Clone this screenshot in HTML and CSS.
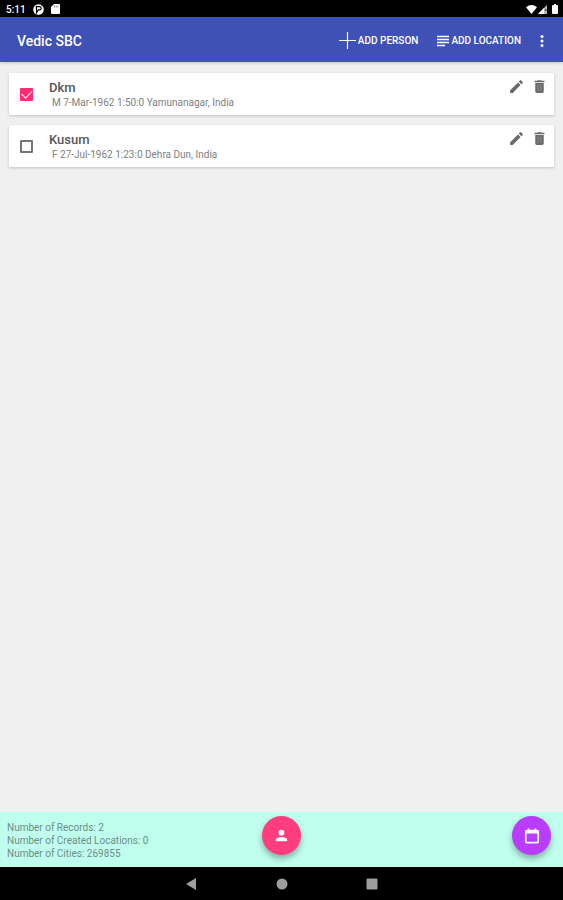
FILE: index.html
```html
<!DOCTYPE html>
<html lang="en">
<head>
    <meta charset="UTF-8">
    <meta name="viewport" content="width=device-width, initial-scale=1.0">
    <title>Vedic SBC</title>
    <link rel="stylesheet" href="styles.css">
</head>
<body>
    <div class="status-bar">
        <span class="clock">5:11</span>
        <svg class="status-icon" width="11" height="11" viewBox="0 0 11 11">
            <circle cx="5.5" cy="5.5" r="5.3" fill="#fff"/>
            <path d="M3.4 2.6h3.2a1.5 1.5 0 0 1 0 3.2H5.4L3.6 8.6z" fill="none" stroke="#000" stroke-width="1.2"/>
        </svg>
        <svg class="status-icon" width="9" height="10" viewBox="0 0 9 10">
            <path d="M3 0h5q1 0 1 1v8q0 1-1 1H1Q0 10 0 9V3z" fill="#fff"/>
            <path d="M3.5 1.5v2M5.2 1.5v2M6.9 1.5v2" stroke="#777" stroke-width=".8"/>
        </svg>
        <div class="signals">
            <svg width="11" height="9" viewBox="0 0 11 9"><path d="M0 2.2Q5.5-2 11 2.2L5.5 9z" fill="#fff"/></svg>
            <svg width="9" height="9" viewBox="0 0 9 9"><path d="M9 0v9H0z" fill="#bbb"/><path d="M6 3v6H0z" fill="#fff"/><path d="M7 4l1.5 2M8.5 4L7 6" stroke="#333" stroke-width=".7"/></svg>
            <svg class="battery" width="6" height="10" viewBox="0 0 6 10"><path d="M2 0h2v1h1q1 0 1 1v7q0 1-1 1H1Q0 10 0 9V2q0-1 1-1h1z" fill="#fff"/></svg>
        </div>
    </div>

    <header class="app-bar">
        <h1>Vedic SBC</h1>
        <button class="menu-button">
            <svg width="17" height="17" viewBox="0 0 17 17"><path d="M8.5 0v17M0 8.5h17" stroke="#fff" stroke-width="1.2"/></svg>
            ADD PERSON
        </button>
        <button class="menu-button">
            <svg width="12" height="12" viewBox="0 0 12 12"><path d="M0 1.5h12M0 4.5h12M0 7.5h12M0 10.5h8" stroke="#fff" stroke-width="1.7"/></svg>
            ADD LOCATION
        </button>
        <button class="more-button" aria-label="More options">
            <svg width="4" height="12" viewBox="0 0 4 12" fill="#fff"><circle cx="2" cy="1.5" r="1.5"/><circle cx="2" cy="6" r="1.5"/><circle cx="2" cy="10.5" r="1.5"/></svg>
        </button>
    </header>

    <main class="people">
        <div class="card">
            <input type="checkbox" id="dkm" checked>
            <label for="dkm">
                <span class="name">Dkm</span>
                <span class="details">M 7-Mar-1962 1:50:0 Yamunanagar, India</span>
            </label>
            <div class="actions">
                <button aria-label="Edit Dkm"><svg width="17" height="17" viewBox="0 0 24 24"><path d="M3 17.25V21h3.75L17.81 9.94l-3.75-3.75L3 17.25zM20.71 7.04a1 1 0 0 0 0-1.41l-2.34-2.34a1 1 0 0 0-1.41 0l-1.83 1.83 3.75 3.75z"/></svg></button>
                <button aria-label="Delete Dkm"><svg width="17" height="17" viewBox="0 0 24 24"><path d="M6 19c0 1.1.9 2 2 2h8c1.1 0 2-.9 2-2V7H6zM19 4h-3.5l-1-1h-5l-1 1H5v2h14z"/><path d="M10 9v9M14 9v9" stroke="#999"/></svg></button>
            </div>
        </div>
        <div class="card">
            <input type="checkbox" id="kusum">
            <label for="kusum">
                <span class="name">Kusum</span>
                <span class="details">F 27-Jul-1962 1:23:0 Dehra Dun, India</span>
            </label>
            <div class="actions">
                <button aria-label="Edit Kusum"><svg width="17" height="17" viewBox="0 0 24 24"><path d="M3 17.25V21h3.75L17.81 9.94l-3.75-3.75L3 17.25zM20.71 7.04a1 1 0 0 0 0-1.41l-2.34-2.34a1 1 0 0 0-1.41 0l-1.83 1.83 3.75 3.75z"/></svg></button>
                <button aria-label="Delete Kusum"><svg width="17" height="17" viewBox="0 0 24 24"><path d="M6 19c0 1.1.9 2 2 2h8c1.1 0 2-.9 2-2V7H6zM19 4h-3.5l-1-1h-5l-1 1H5v2h14z"/><path d="M10 9v9M14 9v9" stroke="#999"/></svg></button>
            </div>
        </div>
    </main>

    <footer class="summary">
        <div class="counts">
            <div>Number of Records: 2</div>
            <div>Number of Created Locations: 0</div>
            <div>Number of Cities: 269855</div>
        </div>
        <button class="fab" aria-label="Person">
            <svg width="17" height="17" viewBox="0 0 24 24"><path d="M12 12a4 4 0 1 0 0-8 4 4 0 0 0 0 8zm0 2c-2.67 0-8 1.34-8 4v2h16v-2c0-2.66-5.33-4-8-4z" fill="#fff"/></svg>
        </button>
        <button class="fab fab-date" aria-label="Calendar">
            <svg width="20" height="20" viewBox="0 0 24 24"><path d="M18.5 4.5H17V3h-2v1.500H9V3H7v1.500H5.500A2 2 0 0 0 3.500 6.500v12.500a2 2 0 0 0 2 2h13a2 2 0 0 0 2-2V6.500a2 2 0 0 0-2-2zm0 14.500h-13V9h13z" fill="#fff"/></svg>
        </button>
    </footer>

    <nav class="nav-bar">
        <button aria-label="Back"><svg width="12" height="12" viewBox="0 0 12 12"><path d="M10 0v12L0 6z"/></svg></button>
        <button aria-label="Home"><svg width="12" height="12" viewBox="0 0 12 12"><circle cx="6" cy="6" r="5.5"/></svg></button>
        <button aria-label="Recent apps"><svg width="12" height="12" viewBox="0 0 12 12"><rect x=".5" y=".5" width="11" height="11" rx="1"/></svg></button>
    </nav>
</body>
</html>
```
FILE: styles.css
```css
* {
    box-sizing: border-box;
}
body {
    font-family: Roboto, sans-serif;
    background-color: #f0f0f0;
    display: flex;
    flex-direction: column;
    min-height: 100vh;
    margin: 0;
}
button {
    background: none;
    border: none;
    padding: 0;
    font-family: inherit;
    cursor: pointer;
}
svg {
    display: block;
    flex: none;
}
.status-bar {
    background-color: #000;
    color: #fff;
    display: flex;
    align-items: center;
    gap: 7px;
    height: 17px;
    padding: 1px 5px 0 6px;
    font-size: 10px;
    font-weight: 500;
}
.signals {
    display: flex;
    align-items: center;
    gap: 1px;
    margin-left: auto;
}
.battery {
    margin-left: 4px;
}
.app-bar {
    background-color: #3f51b5;
    color: #fff;
    display: flex;
    align-items: center;
    height: 45px;
    padding: 2px 19px 0 17px;
    box-shadow: 0 1px 3px rgba(0, 0, 0, 0.2);
}
.app-bar h1 {
    flex: 1;
    margin: 0;
    font-size: 14px;
    font-weight: 500;
}
.menu-button {
    color: #fff;
    display: flex;
    align-items: center;
    gap: 2px;
    margin-right: 19px;
    font-size: 10px;
    font-weight: 500;
}
.people {
    flex: 1;
    display: flex;
    flex-direction: column;
    gap: 10px;
    padding: 11px 9px;
}
.card {
    background-color: #fff;
    display: flex;
    align-items: center;
    height: 42px;
    padding-left: 11px;
    padding-right: 6px;
    border-radius: 1px;
    box-shadow: 0 1px 3px rgba(0, 0, 0, 0.2);
}
.card input {
    appearance: none;
    width: 13px;
    height: 13px;
    margin: 0 16px 0 0;
    border: 2px solid #757575;
    border-radius: 1px;
}
.card input:checked {
    background-color: #ff2e74;
    border-color: #ff2e74;
}
.card input:checked::before {
    content: "";
    display: block;
    width: 9px;
    height: 5px;
    border-left: 1px solid #fff;
    border-bottom: 1px solid #fff;
    transform: rotate(-45deg);
}
.card label {
    flex: 1;
    padding-top: 2px;
}
.name {
    display: block;
    color: #555;
    font-size: 13px;
    font-weight: 500;
    line-height: 16px;
}
.details {
    display: block;
    color: #808080;
    padding-left: 3px;
    font-size: 10px;
    line-height: 14px;
}
.actions {
    align-self: flex-start;
    display: flex;
    gap: 6px;
    padding-top: 5px;
    fill: #6b6b6b;
}
.summary {
    background-color: #c0ffee;
    display: grid;
    grid-template-columns: 1fr auto 1fr;
    align-items: start;
    height: 55px;
    padding-top: 4px;
}
.counts {
    color: #6c8d86;
    padding: 5px 0 0 7px;
    font-size: 10px;
    line-height: 13px;
}
.fab {
    background-color: #ff3d7f;
    display: flex;
    align-items: center;
    justify-content: center;
    width: 39px;
    height: 39px;
    border-radius: 50%;
    box-shadow: 0 4px 6px rgba(0, 0, 0, 0.3);
}
.fab-date {
    background-color: #b93cff;
    justify-self: end;
    margin-right: 12px;
}
.nav-bar {
    background-color: #000;
    display: flex;
    align-items: center;
    justify-content: center;
    gap: 78px;
    height: 33px;
    fill: #9e9e9e;
}
```
